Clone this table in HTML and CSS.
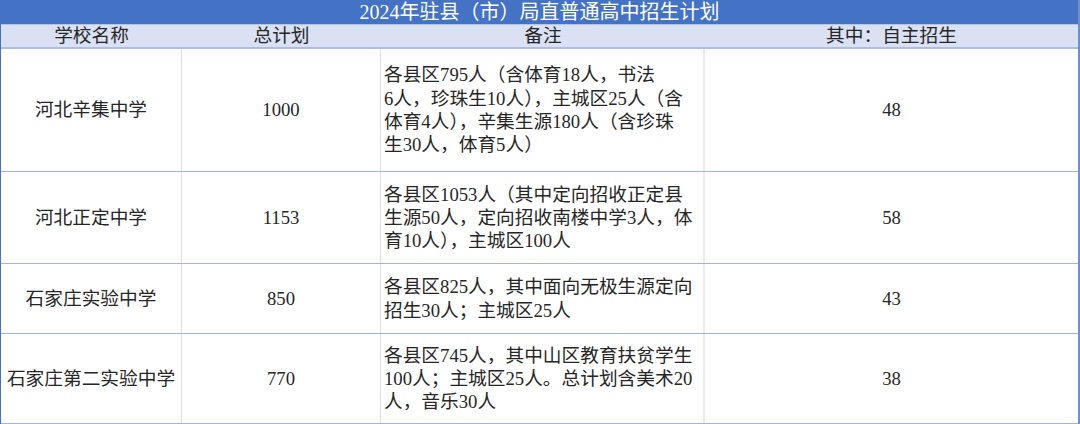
FILE: index.html
```html
<!DOCTYPE html>
<html lang="zh-CN">
<head>
<meta charset="utf-8">
<title>2024年驻县（市）局直普通高中招生计划</title>
<link rel="stylesheet" href="styles.css">
</head>
<body>
<div class="sheet">
  <div class="title">2024年驻县（市）局直普通高中招生计划</div>
  <div class="row head">
    <div class="cell c1">学校名称</div>
    <div class="cell c2">总计划</div>
    <div class="cell c3">备注</div>
    <div class="cell c4">其中：自主招生</div>
  </div>
  <div class="row r1">
    <div class="cell c1">河北辛集中学</div>
    <div class="cell c2">1000</div>
    <div class="cell c3 note">各县区795人（含体育18人，书法<br>6人，珍珠生10人），主城区25人（含<br>体育4人），辛集生源180人（含珍珠<br>生30人，体育5人）</div>
    <div class="cell c4">48</div>
  </div>
  <div class="row r2">
    <div class="cell c1">河北正定中学</div>
    <div class="cell c2">1153</div>
    <div class="cell c3 note">各县区1053人（其中定向招收正定县<br>生源50人，定向招收南楼中学3人，体<br>育10人），主城区100人</div>
    <div class="cell c4">58</div>
  </div>
  <div class="row r3">
    <div class="cell c1">石家庄实验中学</div>
    <div class="cell c2">850</div>
    <div class="cell c3 note">各县区825人，其中面向无极生源定向<br>招生30人；主城区25人</div>
    <div class="cell c4">43</div>
  </div>
  <div class="row r4">
    <div class="cell c1">石家庄第二实验中学</div>
    <div class="cell c2">770</div>
    <div class="cell c3 note">各县区745人，其中山区教育扶贫学生<br>100人；主城区25人。总计划含美术20<br>人，音乐30人</div>
    <div class="cell c4">38</div>
  </div>
</div>
</body>
</html>
```
FILE: styles.css
```css
* { box-sizing: border-box; }
html, body { margin: 0; padding: 0; background: #ffffff; }
body {
  font-family: "Liberation Serif", "Noto Sans CJK SC", serif;
  color: #262626;
}
.sheet {
  width: 1080px;
  height: 424px;
  border-left: 1px solid #4472c4;
  border-right: 2px solid #6f8fd0;
  overflow: hidden;
}
.title {
  height: 25px;
  background: #4472c4;
  border-bottom: 1px solid #b4c6e7;
  color: #ffffff;
  font-size: 20px;
  line-height: 24px;
  text-align: center;
  white-space: nowrap;
}
.row {
  display: grid;
  grid-template-columns: 181px 199px 324px 373px;
  border-bottom: 1px solid #9fb4e0;
}
.head {
  height: 24px;
  background: #d9e1f2;
  border-bottom: 2px solid #abbde6;
}
.head .cell { border-right: none; line-height: 22px; }
.r1 { height: 123px; }
.r2 { height: 92px; }
.r3 { height: 70px; }
.r4 { height: 90px; }
.cell {
  display: flex;
  align-items: center;
  justify-content: center;
  font-size: 18.7px;
  line-height: 23.3px;
  white-space: nowrap;
  border-right: 1px solid #dedede;
}
.c4 { border-right: none; }
.c3 { border-right: 2px solid #ececec; }
.head .c3 { border-right: none; }
.note {
  justify-content: flex-start;
  padding-left: 3px;
}
```
